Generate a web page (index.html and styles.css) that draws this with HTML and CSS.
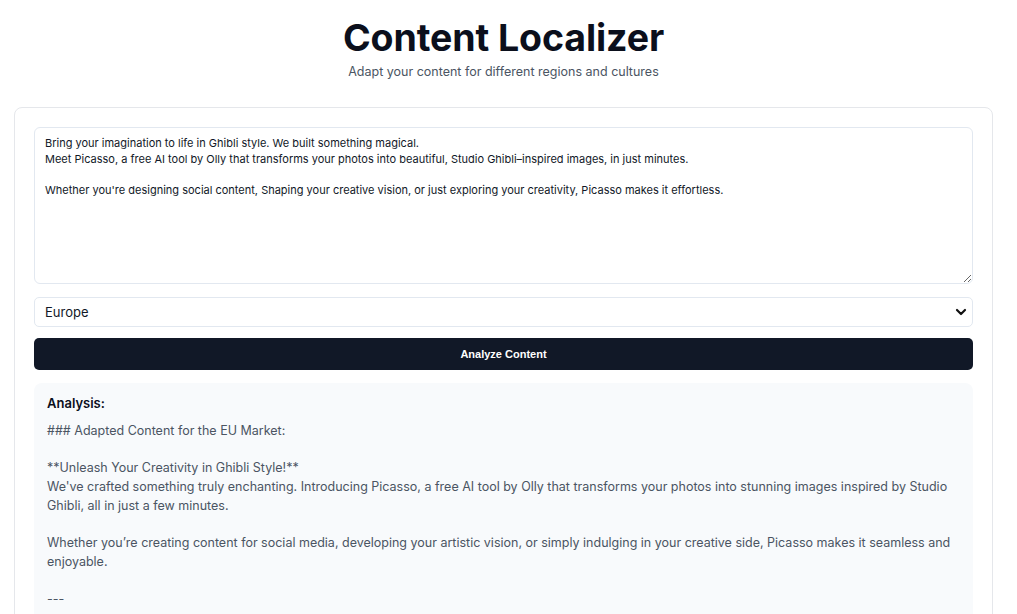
FILE: index.html
```html
<!DOCTYPE html>
<html lang="en">
<head>
<meta charset="utf-8">
<title>Content Localizer</title>
<link rel="stylesheet" href="styles.css">
</head>
<body>
<div class="page">
  <header class="header">
    <h1 class="title">Content Localizer</h1>
    <p class="subtitle">Adapt your content for different regions and cultures</p>
  </header>
  <main class="card">
    <textarea class="input" spellcheck="false">Bring your imagination to life in Ghibli style. We built something magical.
Meet Picasso, a free AI tool by Olly that transforms your photos into beautiful, Studio Ghibli–inspired images, in just minutes.

Whether you're designing social content, Shaping your creative vision, or just exploring your creativity, Picasso makes it effortless.</textarea>
    <div class="select-wrap">
      <select class="select">
        <option>Europe</option>
      </select>
      <svg class="chev" width="12" height="12" viewBox="0 0 12 12"><path d="M2 4l4 4 4-4" fill="none" stroke="#111" stroke-width="2.2" stroke-linecap="round" stroke-linejoin="round"/></svg>
    </div>
    <button class="btn">Analyze Content</button>
    <section class="result">
      <h2 class="result-title">Analysis:</h2>
      <div class="result-body">### Adapted Content for the EU Market:

**Unleash Your Creativity in Ghibli Style!**
We've crafted something truly enchanting. Introducing Picasso, a free AI tool by Olly that transforms your photos into stunning images inspired by Studio Ghibli, all in just a few minutes.

Whether you’re creating content for social media, developing your artistic vision, or simply indulging in your creative side, Picasso makes it seamless and enjoyable.

---</div>
    </section>
  </main>
</div>
</body>
</html>
```
FILE: styles.css
```css
* { box-sizing: border-box; }
html, body { margin: 0; padding: 0; background: #ffffff; }
body { font-family: Inter, "Noto Sans", sans-serif; color: #111827; }
.page { width: 979px; margin-left: 14px; padding-top: 14px; }
.header { text-align: center; }
.title { margin: 0; font-size: 37.5px; font-weight: 700; line-height: 48px; color: #0b0f1c; letter-spacing: -0.1px; }
.subtitle { margin: 1px 0 0; font-size: 12.5px; line-height: 18px; color: #4b5563; }
.card { margin-top: 26px; border: 1px solid #e5e7eb; border-radius: 8px; padding: 19px 19px 20px; display: flex; flex-direction: column; }
.input { display: block; flex-shrink: 0; width: 100%; height: 157px; border: 1px solid #e2e8f0; border-radius: 6px; padding: 8px 10px; font-family: Inter, sans-serif; font-size: 11px; line-height: 15.5px; color: #111827; resize: vertical; outline: none; background: #fff; }
.select-wrap { position: relative; flex-shrink: 0; margin-top: 13px; }
.select { display: block; width: 100%; height: 30px; border: 1px solid #e2e8f0; border-radius: 5px; padding: 0 10px; font-family: Inter, sans-serif; font-size: 13px; color: #111827; background: #fff; appearance: none; -webkit-appearance: none; outline: none; }
.chev { position: absolute; right: 6px; top: 9px; pointer-events: none; }
.btn { display: block; flex-shrink: 0; width: 100%; height: 32px; margin-top: 11px; border: 0; border-radius: 5px; background: #111827; color: #fff; font-family: "Liberation Sans", Arial, sans-serif; font-size: 11px; font-weight: 700; }
.result { flex-shrink: 0; margin-top: 13px; background: #f8fafc; border-radius: 8px; padding: 12px 13px 20px; }
.result-title { margin: 0; font-size: 13px; font-weight: 600; line-height: 16px; color: #0b0f1c; }
.result-body { margin-top: 11px; white-space: pre-wrap; font-size: 12.5px; line-height: 18.7px; color: #4b5563; }
```
